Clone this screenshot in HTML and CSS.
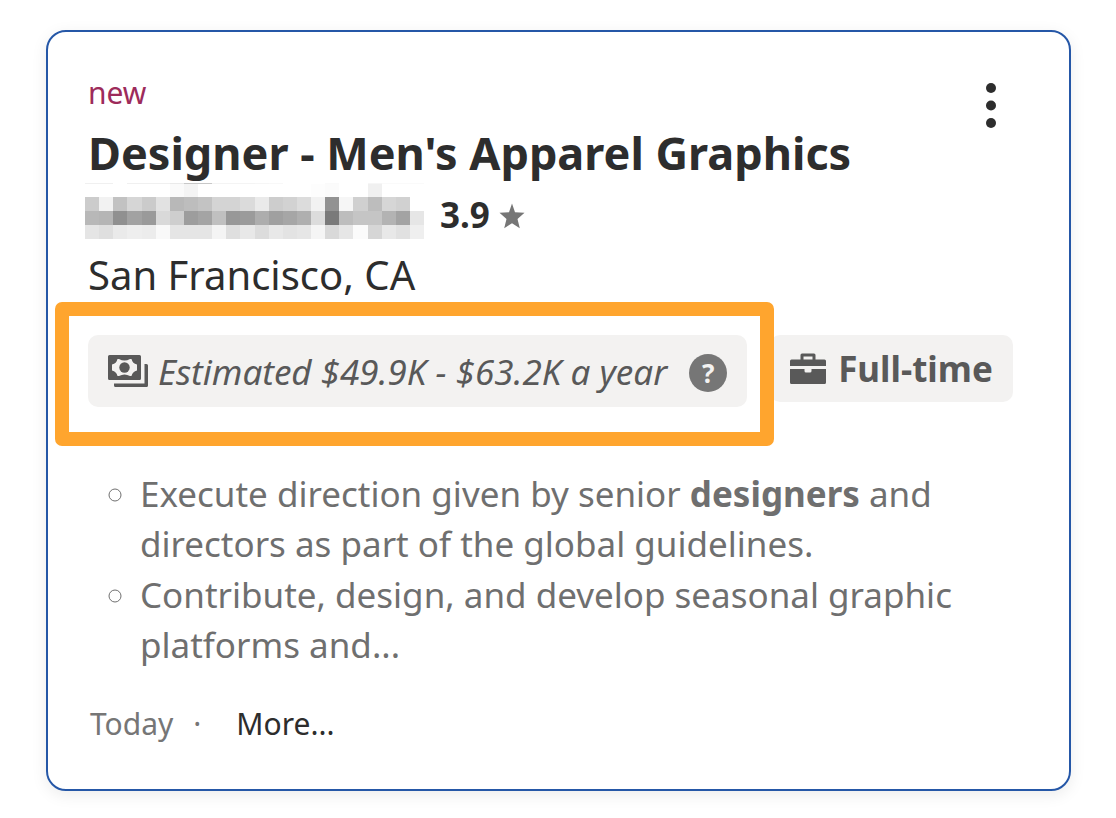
FILE: index.html
```html
<!DOCTYPE html>
<html lang="en">
<head>
    <meta charset="UTF-8">
    <meta name="viewport" content="width=device-width, initial-scale=1.0">
    <title>Designer - Men's Apparel Graphics</title>
    <link rel="stylesheet" href="styles.css">
</head>
<body>
    <article class="card">
        <header class="card-header">
            <div class="heading">
                <p class="new-label">new</p>
                <h2 class="title"><a href="#">Designer - Men's Apparel Graphics</a></h2>
            </div>
            <button class="menu-btn" aria-label="Job actions">
                <svg width="12" height="48" viewBox="0 0 12 48" fill="currentColor">
                    <circle cx="6" cy="6" r="5"/>
                    <circle cx="6" cy="23.5" r="5"/>
                    <circle cx="6" cy="41" r="5"/>
                </svg>
            </button>
        </header>

        <div class="company">
            <!-- Company name is pixelated, cells are filled in by script.js -->
            <svg id="mosaic" class="mosaic" width="340" height="56" viewBox="0 0 340 56"></svg>
            <span class="rating">3.9</span>
            <svg class="star" width="26" height="26" viewBox="0 0 26 26" fill="#767676">
                <path d="M13 0.5L16 9.200L25.500 9.800L18.500 16L20.800 25.300L13 20.300L5.200 25.300L7.500 16L0.500 9.800L10 9.200Z"/>
            </svg>
        </div>
        <p class="location">San Francisco, CA</p>

        <div class="tags">
            <div class="tag salary">
                <svg width="40" height="32" viewBox="0 0 40 32" fill="#595959">
                    <path fill-rule="evenodd" d="M1.5 0H31.5Q33 0 33 1.5V23.5Q33 25 31.5 25H1.5Q0 25 0 23.5V1.5Q0 0 1.5 0ZM9.500 4Q8.500 8.500 4 9.500V15.500Q8.500 16.500 9.500 21H11Q16.500 18 22 21H23.500Q24.500 16.500 29 15.500V9.500Q24.500 8.500 23.500 4H22Q16.500 7 11 4Z"/>
                    <circle cx="16.500" cy="12.500" r="5.200"/>
                    <path d="M36.500 9H38.500Q40 9 40 10.500V30.500Q40 32 38.500 32H7.500Q6 32 6 30.500V28.500H36.500Z"/>
                </svg>
                <span class="estimate">Estimated $49.9K - $63.2K a year</span>
                <button class="help-btn" aria-label="About this estimate">?</button>
            </div>
            <div class="tag">
                <svg width="36" height="32" viewBox="0 0 36 32" fill="#595959">
                    <path fill-rule="evenodd" d="M0 13V8Q0 6.500 1.500 6.500H10.500V2Q10.500 0.500 12 0.500H24Q25.500 0.500 25.500 2V6.500H34.500Q36 6.500 36 8V13ZM13.500 6.500H22.500V3.500H13.500Z"/>
                    <path d="M0 16H14.500V18Q14.500 19.500 16 19.500H20Q21.500 19.500 21.500 18V16H36V29.500Q36 31 34.500 31H1.500Q0 31 0 29.500Z"/>
                </svg>
                <span class="job-type">Full-time</span>
            </div>
        </div>

        <ul class="snippet">
            <li>Execute direction given by senior <b>designers</b> and directors as part of the global guidelines.</li>
            <li>Contribute, design, and develop seasonal graphic platforms and...</li>
        </ul>

        <footer class="card-footer">
            <span>Today</span>
            <span class="dot">·</span>
            <a class="more" href="#">More...</a>
        </footer>
    </article>

    <script src="script.js"></script>
</body>
</html>
```
FILE: styles.css
```css
* {
    margin: 0;
    padding: 0;
    box-sizing: border-box;
}

body {
    padding: 30px 45px 27px 46px;
    background: #fff;
    color: #2d2d2d;
    font-family: "Noto Sans", sans-serif;
}

a {
    color: inherit;
    text-decoration: none;
}

button {
    border: none;
    cursor: pointer;
    font-family: inherit;
}

svg {
    display: block;
    flex-shrink: 0;
}

.card {
    padding: 41px 40px 45px;
    border: 2px solid #2557a7;
    border-radius: 20px;
    box-shadow: 0 4px 16px rgba(0, 0, 0, 0.08);
}

.card-header {
    display: flex;
    justify-content: space-between;
    align-items: flex-start;
}

.new-label {
    color: #9d2b5b;
    font-size: 30px;
    line-height: 40px;
}

.title {
    margin-top: 10px;
    font-size: 45px;
    font-weight: bold;
    line-height: 60px;
}

.menu-btn {
    padding: 9px 32px;
    background: none;
    color: #2d2d2d;
}

.company {
    display: flex;
    align-items: flex-end;
}

.mosaic {
    margin-left: -3px;
}

.rating {
    margin-left: 15px;
    font-size: 35px;
    font-weight: bold;
    line-height: 48px;
}

.star {
    margin: 0 0 10px 9px;
}

.location {
    margin-top: 8px;
    font-size: 40px;
    line-height: 56px;
}

.tags {
    display: flex;
    align-items: flex-start;
    gap: 23px;
    margin-top: 32px;
}

.tag {
    display: flex;
    align-items: center;
    padding: 8px 20px;
    border-radius: 10px;
    background: #f3f2f1;
    color: #595959;
    font-size: 35px;
    line-height: 51px;
    white-space: nowrap;
}

.salary {
    position: relative;
    height: 72px;
}

/* Highlight frame around the salary estimate */
.salary::after {
    content: "";
    position: absolute;
    inset: -33px -27px -39px -33px;
    border: 14px solid #ffa52e;
    border-radius: 7px;
    pointer-events: none;
}

.estimate {
    margin-left: 10px;
    font-style: italic;
}

.help-btn {
    width: 38px;
    height: 38px;
    margin: 4px 0 0 22px;
    border-radius: 50%;
    background: #767676;
    color: #f3f2f1;
    font-size: 26px;
    font-weight: bold;
    line-height: 38px;
}

.job-type {
    margin-left: 12px;
    font-weight: bold;
}

.snippet {
    margin-top: 62px;
    padding-left: 52px;
    color: #6f6f6f;
    font-size: 35px;
    line-height: 50px;
    list-style: circle;
}

.snippet li + li {
    margin-top: 1px;
}

.card-footer {
    display: flex;
    margin-top: 34px;
    padding-left: 2px;
    color: #767676;
    font-size: 30px;
    line-height: 40px;
}

.dot {
    margin: 0 35px 0 20px;
}

.more {
    color: #2d2d2d;
}
```
FILE: script.js
```js
// grey level of each cell, two hex digits per cell
const rows = [
    { y: 0, h: 1, cells: "f0f0fff0f0f0eac8c8f4f4f4f6f8fffffffafffff6fafafa" },
    { y: 1, h: 13, cells: "fffffffffffffaf4fffffffffffffffffdfbfffff0ffffff" },
    { y: 14, h: 14, cells: "ccf2c2d6cbe2b8bdc3d4d4dbeacdd2dcf292f6d0bdd6d1ff" },
    { y: 28, h: 14, cells: "b8b590a29ad9ce9da4c0989bada0a6afdc7abdc5c5b3a3e6" },
    { y: 42, h: 14, cells: "e5dfeaeeecf9e5e5e5f4dfe8dce8e3e6f5d9e6fbd6e8e1ef" }
];
const mosaic = document.getElementById("mosaic");

rows.forEach(row => {
    for (let i = 0; i < 24; i++) {
        const level = row.cells.substr(i * 2, 2);
        const x = Math.round(i * 14.13);
        const rect = document.createElementNS("http://www.w3.org/2000/svg", "rect");
        rect.setAttribute("x", x);
        rect.setAttribute("y", row.y);
        rect.setAttribute("width", Math.round((i + 1) * 14.13) - x);
        rect.setAttribute("height", row.h);
        rect.setAttribute("fill", "#" + level + level + level);
        mosaic.appendChild(rect);
    }
});
```
